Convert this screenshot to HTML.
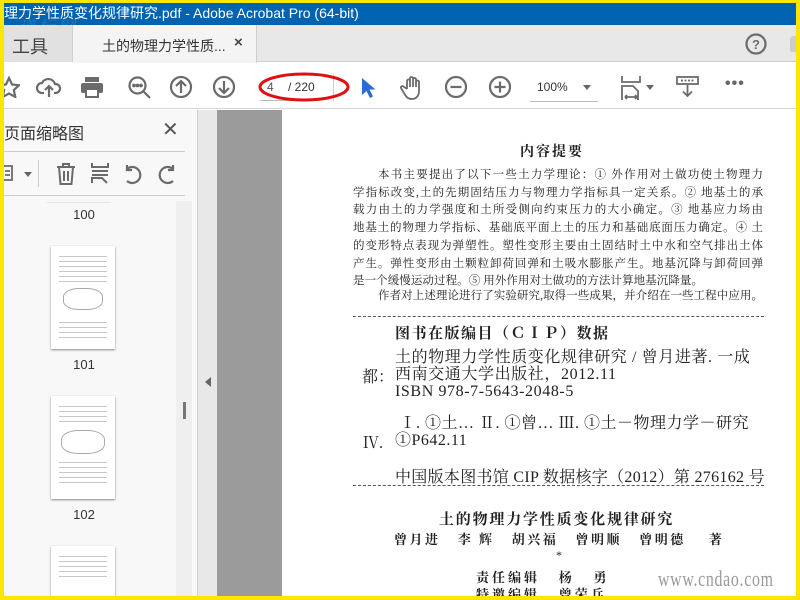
<!DOCTYPE html>
<html><head><meta charset="utf-8"><style>
*{margin:0;padding:0;box-sizing:border-box}
body{width:800px;height:600px;overflow:hidden;background:#ffe600;position:relative;font-family:"Liberation Sans","Noto Sans CJK SC",sans-serif}
.a{position:absolute}
.ser{font-family:"Liberation Serif","Noto Serif CJK SC",serif;color:#222;white-space:nowrap}
.ico{position:absolute;stroke:#6b6b6b;fill:none;stroke-width:2.2}
.pt{position:absolute;left:349px;width:410px;font-size:11.5px;line-height:17.7px}
.pt div{text-align:justify;text-align-last:justify;white-space:nowrap}
.th{position:absolute;left:47px;width:64px;height:103px;background:#fff;box-shadow:0 1px 2px #888}
.th i{display:block;height:1px;background:#c8c8c8;margin:4px 8px 0}
.num{position:absolute;left:60px;width:40px;text-align:center;font-size:13px;color:#333}
</style></head><body>
<div class="a" style="left:4px;top:3px;width:792px;height:593px;background:#fff;overflow:hidden">
<div class="a" style="left:0;top:0;width:792px;height:22px;background:#0063b1;color:#fff;font-size:14px;line-height:20px;white-space:nowrap">理力学性质变化规律研究.pdf - Adobe Acrobat Pro (64-bit)</div>
<div class="a ser" style="left:14px;top:10px;font-size:17px;color:rgba(120,140,160,.45);letter-spacing:3px;font-style:italic">道标网</div>
<div class="a" style="left:0;top:22px;width:792px;height:37px;background:#e8e8e8;border-bottom:1px solid #cfcfcf"></div>
<div class="a" style="left:0;top:22px;width:69px;height:37px;background:#e1e1e1;border-right:1px solid #cfcfcf"></div>
<div class="a" style="left:8px;top:30px;font-size:18px;color:#444">工具</div>
<div class="a" style="left:69px;top:22px;width:184px;height:38px;background:#f4f4f4;border-right:1px solid #cfcfcf"></div>
<div class="a" style="left:98px;top:33px;font-size:14px;color:#333">土的物理力学性质...</div>
<div class="a" style="left:230px;top:31px;font-size:15px;color:#444;font-weight:bold">×</div>
<svg class="ico" style="left:741px;top:30px" width="22" height="22"><circle cx="11" cy="11" r="9.5"/><text x="11" y="16" font-size="13" text-anchor="middle" fill="#6b6b6b" stroke="none" font-weight="bold" font-family="Liberation Sans">?</text></svg>
<div class="a" style="left:786px;top:33px;width:8px;height:16px;background:#ccc;border-radius:4px 0 0 2px"></div>
<div class="a" style="left:0;top:60px;width:792px;height:46px;background:#fff;border-bottom:1px solid #d6d6d6"></div>
<svg class="ico" style="left:-6px;top:73px" width="22" height="22"><path d="M11 2l3 6.5 7 .8-5.2 4.7 1.5 7L11 17.5 4.7 21l1.5-7L1 9.3l7-.8z"/></svg>
<svg class="ico" style="left:32px;top:73px" width="26" height="22"><path d="M8 17H6a5 5 0 0 1 0-10 7 7 0 0 1 13 1 4.5 4.5 0 0 1 1 9h-2M13 21V10M9 14l4-4 4 4"/></svg>
<svg style="position:absolute;left:76px;top:73px" width="24" height="22"><rect x="5" y="1" width="14" height="5" fill="#6b6b6b"/><rect x="1" y="7" width="22" height="10" rx="2" fill="#6b6b6b"/><rect x="6" y="13" width="12" height="8" fill="#fff" stroke="#6b6b6b" stroke-width="2"/></svg>
<svg class="ico" style="left:124px;top:73px" width="24" height="24"><circle cx="9.5" cy="9.5" r="8"/><path d="M15 15l7 7"/><circle cx="6" cy="9.5" r=".8" fill="#6b6b6b"/><circle cx="9.5" cy="9.5" r=".8" fill="#6b6b6b"/><circle cx="13" cy="9.5" r=".8" fill="#6b6b6b"/></svg>
<svg class="ico" style="left:165px;top:72px" width="24" height="24"><circle cx="12" cy="12" r="10"/><path d="M12 18V6M7 11l5-5 5 5"/></svg>
<svg class="ico" style="left:208px;top:72px" width="24" height="24"><circle cx="12" cy="12" r="10"/><path d="M12 6v12M7 13l5 5 5-5"/></svg>
<div class="a" style="left:256px;top:75px;width:60px;height:23px;border-bottom:1px solid #bbb"></div>
<div class="a" style="left:263px;top:77px;font-size:12px;color:#555">4</div>
<div class="a" style="left:284px;top:77px;font-size:12px;color:#333">/ 220</div>
<div class="a" style="left:329px;top:72px;width:1px;height:26px;background:#ccc"></div>
<svg class="a" style="left:252px;top:66px" width="96" height="36"><ellipse cx="48" cy="18" rx="44" ry="13" fill="none" stroke="#e01010" stroke-width="3"/></svg>
<svg style="position:absolute;left:356px;top:74px" width="18" height="22"><path d="M2 1v17l4.5-4 3.5 7 3-1.5-3.5-7h6z" fill="#2a6bd4"/></svg>
<svg class="ico" style="left:396px;top:72px;stroke-width:1.8" width="26" height="26"><path d="M7 14V6a1.5 1.5 0 0 1 3 0v6V3.5a1.5 1.5 0 0 1 3 0V12V4.5a1.5 1.5 0 0 1 3 0V12V7a1.5 1.5 0 0 1 3 0v9c0 5-3 8-7 8s-6-2-8-6l-3-5a1.5 1.5 0 0 1 2.5-1.5L7 14"/></svg>
<svg class="ico" style="left:440px;top:72px" width="24" height="24"><circle cx="12" cy="12" r="10"/><path d="M6.5 12h11"/></svg>
<svg class="ico" style="left:484px;top:72px" width="24" height="24"><circle cx="12" cy="12" r="10"/><path d="M6.5 12h11M12 6.5v11"/></svg>
<div class="a" style="left:533px;top:77px;font-size:12px;color:#333">100%</div>
<div class="a" style="left:579px;top:82px;border:4px solid transparent;border-top:5px solid #666"></div>
<div class="a" style="left:526px;top:98px;width:68px;height:1px;background:#bbb"></div>
<svg class="ico" style="left:617px;top:72px;stroke-width:1.8" width="22" height="26"><path d="M1 1v6h18V1M1 25V11h11l5 5v9M4 22h12M4 22l2-2M4 22l2 2M16 22l-2-2M16 22l-2 2"/></svg>
<div class="a" style="left:642px;top:82px;border:4px solid transparent;border-top:5px solid #666"></div>
<svg class="ico" style="left:672px;top:73px;stroke-width:1.8" width="24" height="22"><rect x="1" y="1" width="21" height="7"/><path d="M5 4.5h13" stroke-dasharray="2 1.5"/><path d="M11.5 9v11M7 15.5l4.5 4.5 4.5-4.5"/></svg>
<div class="a" style="left:721px;top:72px;font-size:16px;color:#666;letter-spacing:1px;font-weight:bold">•••</div>
<div class="a" style="left:0;top:107px;width:193px;height:486px;background:#f8f8f8"></div>
<div class="a" style="left:0;top:117px;font-size:16px;color:#333">页面缩略图</div>
<div class="a" style="left:158px;top:114px;font-size:20px;color:#555">✕</div>
<div class="a" style="left:0;top:148px;width:181px;height:1px;background:#ccc"></div>
<svg class="ico" style="left:0;top:160px;stroke-width:1.8" width="12" height="20"><path d="M0 3h8v14H0M1 8h5M1 12h5"/></svg>
<div class="a" style="left:20px;top:169px;border:4px solid transparent;border-top:5px solid #666"></div>
<div class="a" style="left:34px;top:157px;width:1px;height:27px;background:#ccc"></div>
<svg class="ico" style="left:52px;top:160px;stroke-width:2" width="20" height="22"><path d="M1 4h18M7 4V1h6v3M3 4l1.5 17h11L17 4M8 8v10M12 8v10"/></svg>
<svg class="ico" style="left:86px;top:159px;stroke-width:2" width="20" height="22"><path d="M2 1v4h16V1M2 9h16M2 13h16M2 21v-5h10l5 5"/></svg>
<svg class="ico" style="left:118px;top:160px;stroke-width:2.2" width="22" height="22"><path d="M5 18a8 8 0 1 0 0-12M5 2v5h5"/></svg>
<svg class="ico" style="left:152px;top:160px;stroke-width:2.2" width="22" height="22"><path d="M17 18a8 8 0 1 1 0-12M17 2v5h-5"/></svg>
<div class="a" style="left:0;top:192px;width:181px;height:1px;background:#ccc"></div>
<div class="a" style="left:172px;top:198px;width:16px;height:395px;background:#efefef"></div>
<div class="a" style="left:179px;top:399px;width:3px;height:17px;background:#777"></div>
<div class="a" style="left:43px;top:199px;width:64px;height:1px;background:#e5e5e5"></div>
<div class="num" style="top:204px">100</div>
<div class="th" style="top:243px"><i style="margin-top:10px"></i><i></i><i></i><i></i><i></i><i></i><i style="height:22px;background:none;border:1px solid #aaa;border-radius:40%;margin:6px 12px 0"></i><i style="margin-top:12px"></i><i></i><i></i><i></i></div>
<div class="num" style="top:354px">101</div>
<div class="th" style="top:393px"><i style="margin-top:10px"></i><i></i><i></i><i></i><i style="height:24px;background:none;border:1px solid #aaa;border-radius:40%;margin:8px 10px 0"></i><i style="margin-top:8px"></i><i></i><i></i><i></i><i></i></div>
<div class="num" style="top:504px">102</div>
<div class="th" style="top:543px;height:50px"><i style="margin-top:10px"></i><i></i><i></i><i></i><i></i></div>
<div class="a" style="left:193px;top:107px;width:20px;height:486px;background:#e8e8e8;border-left:1px solid #cfcfcf"></div>
<div class="a" style="left:201px;top:374px;border:5px solid transparent;border-right:6px solid #666;border-left:0"></div>
<div class="a" style="left:213px;top:107px;width:65px;height:486px;background:#9b9b9b"></div>
<div class="a" style="left:278px;top:107px;width:514px;height:486px;background:#fff;overflow:hidden">
<div style="position:absolute;left:-278px;top:-110px;width:800px;height:600px;overflow:hidden">
<div class="a ser" style="left:516px;top:141px;font-size:14px;font-weight:bold;letter-spacing:2px">内容提要</div>
<div class="pt ser" style="top:167px">
<div style="margin-left:25px">本书主要提出了以下一些土力学理论：① 外作用对土做功使土物理力</div>
<div>学指标改变,土的先期固结压力与物理力学指标具一定关系。② 地基土的承</div>
<div>载力由土的力学强度和土所受侧向约束压力的大小确定。③ 地基应力场由</div>
<div>地基土的物理力学指标、基础底平面上土的压力和基础底面压力确定。④ 土</div>
<div>的变形特点表现为弹塑性。塑性变形主要由土固结时土中水和空气排出土体</div>
<div>产生。弹性变形由土颗粒卸荷回弹和土吸水膨胀产生。地基沉降与卸荷回弹</div>
<div style="width:350px">是一个缓慢运动过程。⑤ 用外作用对土做功的方法计算地基沉降量。</div>
<div style="margin-left:25px;margin-top:-3px">作者对上述理论进行了实验研究,取得一些成果，并介绍在一些工程中应用。</div>
</div>
<div class="a" style="left:349px;top:316px;width:411px;border-top:1px dashed #555"></div>
<div class="a ser" style="left:391px;top:322px;font-size:15px;font-weight:bold;letter-spacing:1.5px">图书在版编目（ＣＩＰ）数据</div>
<div class="a ser" style="left:391px;top:349px;font-size:16px;line-height:17px;letter-spacing:0.6px">土的物理力学性质变化规律研究 / 曾月进著. 一成<br>西南交通大学出版社，2012.11<br>ISBN 978-7-5643-2048-5</div>
<div class="a ser" style="left:358px;top:364px;font-size:16px">都：</div>
<div class="a ser" style="left:391px;top:415px;font-size:16px;line-height:17px;letter-spacing:0.5px">&nbsp;Ⅰ. ①土… Ⅱ. ①曾… Ⅲ. ①土－物理力学－研究<br>①P642.11</div>
<div class="a ser" style="left:359px;top:430px;font-size:16px">Ⅳ.</div>
<div class="a ser" style="left:391px;top:464px;font-size:16px;letter-spacing:0.3px">中国版本图书馆 CIP 数据核字（2012）第 276162 号</div>
<div class="a" style="left:349px;top:485px;width:411px;border-top:1px dashed #555"></div>
<div class="a ser" style="left:435px;top:508px;font-size:15px;font-weight:bold;letter-spacing:1.8px">土的物理力学性质变化规律研究</div>
<div class="a ser" style="left:390px;top:529px;font-size:13px;font-weight:bold;letter-spacing:2.5px;white-space:pre">曾月进   李 辉   胡兴福   曾明顺   曾明德    著</div>
<div class="a ser" style="left:552px;top:548px;font-size:12px">*</div>
<div class="a ser" style="left:472px;top:569px;font-size:13px;font-weight:bold;letter-spacing:3px;white-space:pre;line-height:17px">责任编辑   杨   勇<br>特邀编辑   曾荣兵</div>
<div class="a" style="left:654px;top:566px;font-size:22px;color:#999;font-family:'Liberation Serif',serif;transform:scaleX(.72);transform-origin:left;letter-spacing:1px">www.cndao.com</div>
</div></div>
</div>
</body></html>
